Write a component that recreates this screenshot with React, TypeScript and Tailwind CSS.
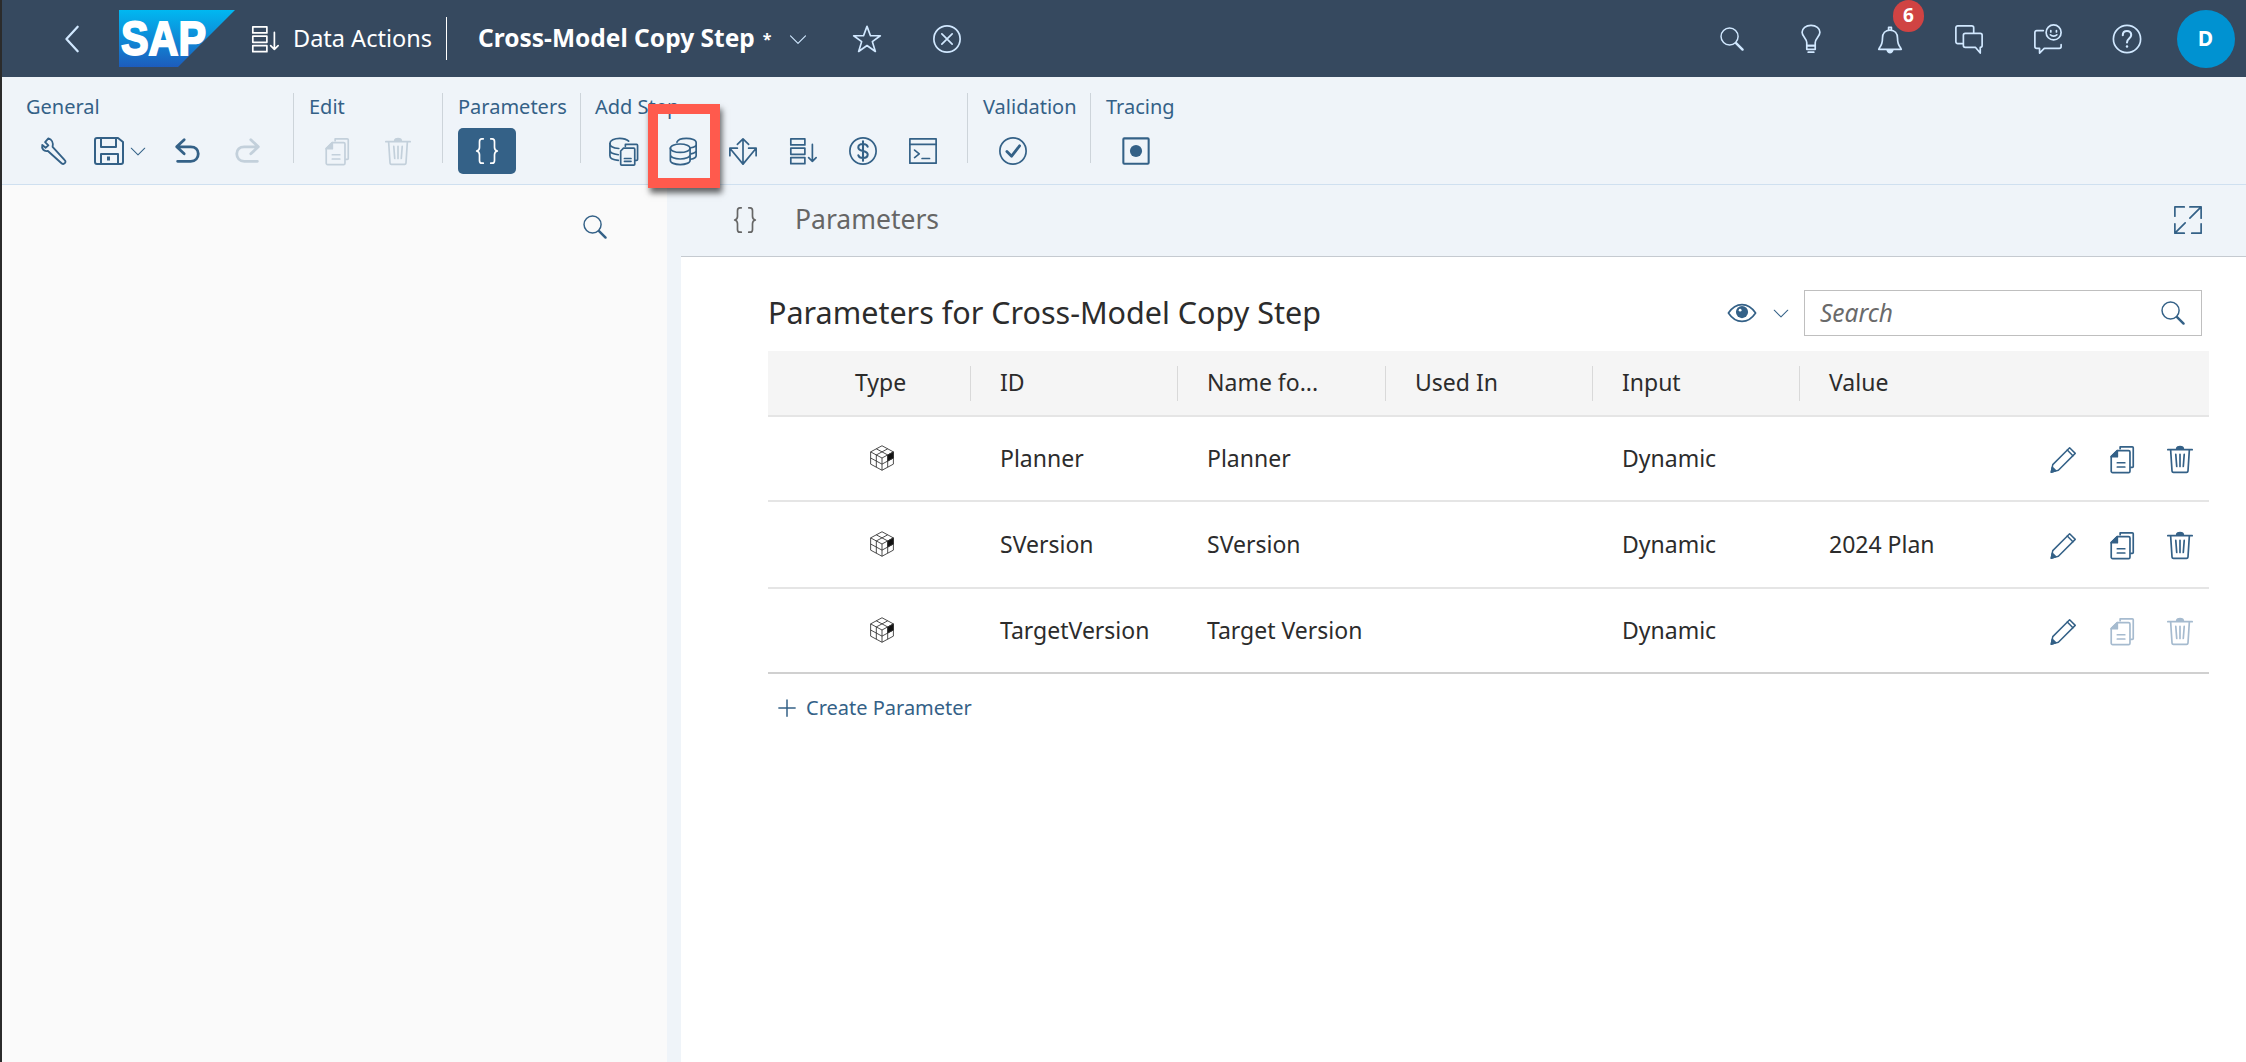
import React from "react";

type IconProps = { className?: string; children?: React.ReactNode };

function Icon({ className = "w-[30px] h-[30px]", children }: IconProps) {
  return (
    <svg viewBox="0 0 32 32" fill="none" stroke="currentColor" strokeWidth="1.8" strokeLinecap="round" strokeLinejoin="round" className={className} aria-hidden="true">
      {children}
    </svg>
  );
}

const WrenchIcon = () => (
  <Icon>
    <path strokeWidth="2" d="M10 2.500L6.500 6.500l3.500 3.500-3 2.500-3.500-3C2.500 13.500 5 17 9.500 16l14.500 13c1.200 1 2.500 1 3.500 0s1-2.300-.1-3.300L14.500 11.500C15.500 7 13.500 3.500 10 2.500z" />
  </Icon>
);
const SaveIcon = () => (
  <Icon className="w-[32px] h-[32px]">
    <path strokeWidth="2" d="M4 3h21l5 4v20a2 2 0 0 1-2 2H4a2 2 0 0 1-2-2V5a2 2 0 0 1 2-2z" />
    <path strokeWidth="2" d="M8 3v9h15V3M8 29V19h17v10" />
    <rect x="14" y="21.500" width="3" height="4" fill="currentColor" stroke="none" />
  </Icon>
);
const UndoIcon = () => (
  <Icon>
    <path strokeWidth="3" d="M13 4L5 11.500l8 7.500M6 11.500h14c5 0 8 3 8 7.500s-3 8-8 8H6" />
  </Icon>
);
const RedoIcon = () => (
  <Icon>
    <path strokeWidth="3" d="M19 4l8 7.500-8 7.500M26 11.500H12c-5 0-8 3-8 7.500s3 8 8 8h14" />
  </Icon>
);
const CopyIcon = () => (
  <Icon>
    <path d="M14 5V3h13a1 1 0 0 1 1 1v20a1 1 0 0 1-1 1h-1.500" />
    <path d="M11 7h12a1.500 1.500 0 0 1 1.500 1.500V29a1.500 1.500 0 0 1-1.500 1.500H6A1.500 1.500 0 0 1 4.500 29V13.500z" />
    <path d="M11 7v6.500H4.500z" fill="currentColor" />
    <path d="M11 20h8M11 24.500h8" />
  </Icon>
);
const TrashIcon = () => (
  <Icon>
    <path d="M3 6h26M6 6l1.500 23a1.500 1.500 0 0 0 1.500 1.300h14a1.500 1.500 0 0 0 1.500-1.300L26 6" />
    <path d="M12.500 5c0-3 7-3 7 0z" fill="currentColor" />
    <path d="M11.500 11l1 13M16 11v13M20.500 11l-1 13" />
  </Icon>
);
const BracesIcon = () => (
  <Icon>
    <path d="M12 3H10.500C8.500 3 8 4 8 6v6c0 2-1 3.500-3 4 2 .5 3 2 3 4v6c0 2 .5 3 2.500 3H12" />
    <path d="M20 3h1.500C23.500 3 24 4 24 6v6c0 2 1 3.500 3 4-2 .5-3 2-3 4v6c0 2-.5 3-2.500 3H20" />
  </Icon>
);
const DbCopyIcon = () => (
  <Icon className="w-[33px] h-[30px]">
    <path d="M1.500 8c0-3 4.500-5.500 10.500-5.500 4 0 7.500 1 9.500 3" />
    <path d="M1.500 8c0 3 4 5 9.500 5.300M1.500 8v13c0 2.500 3.500 4.500 9 5M1.500 15c0 2.500 3.500 4.500 9 5" />
    <path d="M18 11V9h12a1 1 0 0 1 1 1v15a1 1 0 0 1-1 1h-1" />
    <path d="M16 13h11a1 1 0 0 1 1 1v16a1 1 0 0 1-1 1H14a1 1 0 0 1-1-1V16z" />
    <path d="M17 24h7M17 27h7" />
  </Icon>
);
const DbStackIcon = () => (
  <Icon className="w-[33px] h-[30px]">
    <ellipse cx="12.500" cy="13" rx="10.500" ry="4.500" />
    <path d="M2 13v13c0 2.500 4.500 4.500 10.500 4.500S23 28.500 23 26V13M2 20c0 2.500 4.500 4.500 10.500 4.500S23 22.500 23 20" />
    <path d="M9 6.500C10 4 14 2.500 19 2.500c6 0 10.500 2 10.500 4.500v14c0 1.500-2 3-6 3.800M24 12.500c3-.5 5.500-2 5.500-3.500M24 19c3-.5 5.500-2 5.500-3.500" />
  </Icon>
);
const AllocateIcon = () => (
  <Icon>
    <path d="M16 3v27M10 9l6-6 6 6M16 30L2 13M16 30l14-17M2 13h8M2 13v8M30 13h-8M30 13v8" />
  </Icon>
);
const SortListIcon = () => (
  <Icon>
    <rect x="3" y="3" width="15" height="6.500" />
    <rect x="3" y="13" width="15" height="6.500" />
    <rect x="3" y="23" width="15" height="6.500" />
    <path d="M26 9v18M22 23l4 4 4-4" />
  </Icon>
);
const DollarIcon = () => (
  <Icon>
    <circle cx="16" cy="16" r="14" />
    <path strokeWidth="2.200" d="M21 11.500C20.500 9.500 18.500 8.500 16 8.500c-3 0-5 1.500-5 3.700 0 5 10 2.600 10 7.600 0 2.200-2 3.700-5 3.700-2.500 0-4.500-1-5-3M16 5.500v21" />
  </Icon>
);
const ConsoleIcon = () => (
  <Icon>
    <rect x="2" y="3" width="28" height="26" />
    <path d="M2 9h28M7 15l5 4-5 4M15 24h8" />
  </Icon>
);
const CheckCircleIcon = () => (
  <Icon>
    <circle cx="16" cy="16" r="14" />
    <path strokeWidth="3" d="M9.500 16.500l5 5 8.500-11" />
  </Icon>
);
const RecordIcon = () => (
  <Icon>
    <rect x="2.500" y="2.500" width="27" height="27" rx="1" strokeWidth="2.200" />
    <circle cx="16" cy="16" r="6.500" fill="currentColor" stroke="none" />
  </Icon>
);
const SearchIcon = ({ className }: IconProps) => (
  <Icon className={className}>
    <circle cx="13" cy="13" r="10.500" />
    <path strokeWidth="3" d="M21 21l8 8" />
  </Icon>
);
const ChevronDown = ({ className }: IconProps) => (
  <Icon className={className}>
    <path d="M4 11l12 12 12-12" />
  </Icon>
);
const StarIcon = () => (
  <Icon>
    <path d="M16 2.500l3.700 10h10.500l-8.500 6.300 3.200 10.500L16 23l-8.900 6.300 3.200-10.500-8.500-6.300h10.500z" />
  </Icon>
);
const CloseCircleIcon = () => (
  <Icon>
    <circle cx="16" cy="16" r="14" />
    <path d="M10.500 10.500l11 11M21.500 10.500l-11 11" />
  </Icon>
);
const BulbIcon = () => (
  <Icon>
    <path d="M11.500 23v-3c0-2-1-3.500-2.500-5.500-1.500-2-2.500-3.500-2.500-5.700C6.500 4.500 10.500 1.500 16 1.500s9.500 3 9.500 7.300c0 2.200-1 3.700-2.500 5.700-1.500 2-2.500 3.500-2.500 5.500v3z" />
    <path d="M11.500 23h9v4h-9zM13 30h6" />
  </Icon>
);
const BellIcon = () => (
  <Icon>
    <path d="M5 25c2.500-3 3-5.500 3-10 0-5 3-8.500 8-8.500s8 3.500 8 8.500c0 4.500.5 7 3 10l1 2H4z" />
    <path d="M14.500 6.500V3.500h3v3" />
    <path d="M13 27.500c.5 2 1.500 3 3 3s2.500-1 3-3z" fill="currentColor" />
  </Icon>
);
const ChatsIcon = () => (
  <Icon>
    <path d="M9 21H4a2 2 0 0 1-2-2V4a2 2 0 0 1 2-2h15a2 2 0 0 1 2 2v5" />
    <path d="M12 10h16a2 2 0 0 1 2 2v11a2 2 0 0 1-2 2v6l-5-6H12a2 2 0 0 1-2-2V12a2 2 0 0 1 2-2z" />
  </Icon>
);
const FeedbackIcon = () => (
  <Icon>
    <circle cx="22" cy="9" r="8" />
    <path d="M19 7v1.500M25 7v1.500M18.500 11.500c1.800 2 5.200 2 7 0" />
    <path d="M11 7H4a2 2 0 0 0-2 2v15a2 2 0 0 0 2 2h3v5l5-5h16a2 2 0 0 0 2-2v-2" />
  </Icon>
);
const HelpIcon = () => (
  <Icon>
    <circle cx="16" cy="16" r="14.500" />
    <path strokeWidth="2.200" d="M11.500 12c0-3 2-4.500 4.500-4.500s4.500 1.700 4.500 4.200c0 3.800-4.500 3.800-4.500 8" />
    <circle cx="16" cy="24" r="1.300" fill="currentColor" stroke="none" />
  </Icon>
);
const ExpandIcon = () => (
  <Icon>
    <path d="M18 2h12v12M30 2L18 14M2 20v10h10M2 30l11-11M2 12V2h10M20 30h10V20" />
  </Icon>
);
const EyeIcon = () => (
  <Icon>
    <path d="M1.500 16C5.500 10 10 7 16 7s10.500 3 14.500 9c-4 6-8.500 9-14.500 9S5.500 22 1.500 16z" />
    <circle cx="16" cy="15" r="6.500" fill="currentColor" stroke="none" />
    <circle cx="14" cy="13" r="1.500" fill="#fff" stroke="none" />
  </Icon>
);
const PencilIcon = () => (
  <Icon>
    <path strokeWidth="1.600" d="M22 4l6 6L10 28l-7.500 2 1.500-8z" />
    <path strokeWidth="1.600" d="M19.500 6.500l6 6" />
    <path d="M3.500 25l3.500 3.500-4.500 1.500z" fill="currentColor" />
  </Icon>
);
const PlusIcon = () => (
  <Icon className="w-[20px] h-[20px]">
    <path strokeWidth="2.400" d="M16 3v26M3 16h26" />
  </Icon>
);
const CubeIcon = () => (
  <svg viewBox="0 0 32 32" fill="none" stroke="#333" strokeWidth="1" strokeLinejoin="round" className="w-[28px] h-[28px]" aria-hidden="true">
    <path d="M16 2l13 7v14l-13 7-13-7V9z" />
    <path d="M3 9l13 7 13-7M16 16v14" />
    <path d="M9.500 5.500l13 7M22.500 5.500l-13 7M9.500 12.500v14M22.500 12.500v14M3 16l13 7 13-7" />
    <path d="M22.500 12.500L29 9v7l-6.500 3.500z" fill="#111" />
  </svg>
);
const SapLogo = () => (
  <svg viewBox="0 0 116 57" className="w-[116px] h-[57px]" aria-label="SAP">
    <defs>
      <linearGradient id="sap" x1="0" y1="0" x2="0" y2="1">
        <stop offset="0" stopColor="#00b8f1" />
        <stop offset="1" stopColor="#1d5cbc" />
      </linearGradient>
    </defs>
    <path d="M0 0h116L59 57H0z" fill="url(#sap)" />
    <text x="2" y="45" fontFamily="Liberation Sans, sans-serif" fontWeight="700" fontSize="48" textLength="85" lengthAdjust="spacingAndGlyphs" fill="#fff" stroke="#fff" strokeWidth="2">
      SAP
    </text>
  </svg>
);

function Tool({ w, dim, children }: { w: string; dim?: boolean; children: React.ReactNode }) {
  return <div className={`${w} ${dim ? "text-[#c3d0db]" : "text-[#346187]"} flex items-center justify-center`}>{children}</div>;
}

function Group({ label, className, children }: { label: string; className: string; children: React.ReactNode }) {
  return (
    <div className={`${className} relative flex flex-col shrink-0 pt-[8px]`}>
      <div className="h-[44px] text-[20px] leading-[44px] text-[#346187]">{label}</div>
      <div className="flex h-[48px] items-center -mt-[2px]">{children}</div>
    </div>
  );
}

const Sep = () => <div className="w-px h-[70px] bg-[#cdd4da] mt-[16px] shrink-0" />;

const rows = [
  { id: "Planner", name: "Planner", value: "", dim: false },
  { id: "SVersion", name: "SVersion", value: "2024 Plan", dim: false },
  { id: "TargetVersion", name: "Target Version", value: "", dim: true },
];

const columns = ["ID", "Name fo...", "Used In", "Input", "Value"];
const gridCols = "grid grid-cols-[202px_207px_208px_207px_207px_207px_1fr]";

export default function App() {
  return (
    <div className="relative h-[1062px] w-[2246px] overflow-hidden border-l-2 border-[#2b2b2b] bg-white font-['Noto_Sans',sans-serif] text-[#2c2c2c] flex flex-col">
      {/* Shell bar */}
      <header className="h-[77px] shrink-0 bg-[#36495f] text-white flex items-center">
        <div className="w-[117px] pl-[56px] text-[#d1e8ff] shrink-0">
          <Icon className="w-[30px] h-[30px]">
            <path strokeWidth="2.400" d="M21 3L9 16l12 13" />
          </Icon>
        </div>
        <SapLogo />
        <div className="ml-[15px] text-white">
          <SortListIcon />
        </div>
        <span className="ml-[13px] text-[23.500px] whitespace-nowrap">Data Actions</span>
        <div className="ml-[14px] w-px h-[43px] bg-white" />
        <span className="ml-[31px] text-[24.500px] font-bold whitespace-nowrap">Cross-Model Copy Step</span>
        <span className="ml-[8px] text-[16px] font-bold">*</span>
        <div className="ml-[17px] text-[#d1e8ff]">
          <ChevronDown className="w-[20px] h-[20px]" />
        </div>
        <div className="ml-[44px] text-[#d1e8ff]">
          <StarIcon />
        </div>
        <div className="ml-[50px] text-[#d1e8ff]">
          <CloseCircleIcon />
        </div>
        <div className="ml-auto flex items-center text-[#d1e8ff] pr-[1px]">
          <div className="w-[79px] flex justify-center"><SearchIcon className="w-[26px] h-[26px]" /></div>
          <div className="w-[79px] flex justify-center"><BulbIcon /></div>
          <div className="w-[79px] flex justify-center relative">
            <BellIcon />
            <span className="absolute left-[43px] -top-[24px] w-[31px] h-[32px] rounded-full bg-[#d04343] text-white text-[19px] font-bold flex items-center justify-center">6</span>
          </div>
          <div className="w-[79px] flex justify-center"><ChatsIcon /></div>
          <div className="w-[79px] flex justify-center"><FeedbackIcon /></div>
          <div className="w-[79px] flex justify-center"><HelpIcon /></div>
          <div className="w-[79px] flex justify-center">
            <div className="w-[58px] h-[58px] rounded-full bg-[#0092d1] text-white text-[21px] font-bold flex items-center justify-center">D</div>
          </div>
        </div>
      </header>

      {/* Toolbar */}
      <div className="h-[108px] shrink-0 bg-[#eff4f9] border-b border-[#cfe0f0] flex pl-[24px]">
        <Group label="General" className="w-[267px]">
          <Tool w="w-[56px]"><WrenchIcon /></Tool>
          <Tool w="w-[76px] gap-[4px]">
            <SaveIcon />
            <ChevronDown className="w-[18px] h-[18px]" />
          </Tool>
          <Tool w="w-[58px]"><UndoIcon /></Tool>
          <Tool w="w-[64px]" dim><RedoIcon /></Tool>
        </Group>
        <Sep />
        <Group label="Edit" className="w-[148px] pl-[15px]">
          <Tool w="w-[55px]" dim><CopyIcon /></Tool>
          <Tool w="w-[68px]" dim><TrashIcon /></Tool>
        </Group>
        <Sep />
        <Group label="Parameters" className="w-[137px] pl-[15px]">
          <div className="w-[58px] h-[46px] rounded-[5px] bg-[#346187] text-white flex items-center justify-center">
            <BracesIcon />
          </div>
        </Group>
        <Sep />
        <Group label="Add Step" className="w-[386px] pl-[14px]">
          <Tool w="w-[60px] -ml-[2px]"><DbCopyIcon /></Tool>
          <Tool w="w-[60px]"><DbStackIcon /></Tool>
          <Tool w="w-[60px]"><AllocateIcon /></Tool>
          <Tool w="w-[60px]"><SortListIcon /></Tool>
          <Tool w="w-[60px]"><DollarIcon /></Tool>
          <Tool w="w-[60px]"><ConsoleIcon /></Tool>
        </Group>
        <Sep />
        <Group label="Validation" className="w-[122px] pl-[15px]">
          <Tool w="w-[60px]"><CheckCircleIcon /></Tool>
        </Group>
        <Sep />
        <Group label="Tracing" className="w-[120px] pl-[15px]">
          <Tool w="w-[60px]"><RecordIcon /></Tool>
        </Group>
      </div>

      {/* Body */}
      <div className="flex flex-1 min-h-0">
        <aside className="w-[665px] shrink-0 bg-[#fafafa] flex justify-end pr-[59px] pt-[29px]">
          <div className="text-[#346187]"><SearchIcon className="w-[26px] h-[26px]" /></div>
        </aside>
        <div className="flex-1 flex flex-col bg-[#eff4f9] min-w-0">
          <div className="h-[71px] shrink-0 flex items-center pb-[2px]">
            <div className="ml-[63px] text-[#666]"><BracesIcon /></div>
            <span className="ml-[35px] text-[26.500px] text-[#666]">Parameters</span>
            <div className="ml-auto mr-[43px] text-[#346187]"><ExpandIcon /></div>
          </div>
          <main className="ml-[14px] flex-1 bg-white border-t border-[#c5cad0] pl-[87px] pr-[37px]">
            <div className="h-[94px] flex items-center pt-[18px]">
              <h1 className="text-[30.500px] font-normal text-[#2c2c2c]">Parameters for Cross-Model Copy Step</h1>
              <div className="ml-auto flex items-center text-[#346187] mr-[7px]">
                <EyeIcon />
                <div className="ml-[15px] mr-[14px]"><ChevronDown className="w-[18px] h-[18px]" /></div>
                <div className="w-[398px] h-[46px] border border-[#bfbfbf] bg-white flex items-center pl-[15px] pr-[15px]">
                  <span className="italic text-[24.500px] text-[#6a6a6a]">Search</span>
                  <div className="ml-auto"><SearchIcon className="w-[26px] h-[26px]" /></div>
                </div>
              </div>
            </div>

            <div className={`${gridCols} h-[66px] bg-[#f5f5f5] border-b-2 border-[#e5e5e5] items-center text-[23px]`}>
              <div className="pl-[87px] -mt-[2px]">Type</div>
              {columns.map((c) => (
                <div key={c} className="h-[35px] border-l border-[#d9d9d9] pl-[29px] flex items-center pb-[2px]">{c}</div>
              ))}
            </div>

            {rows.map((r, i) => (
              <div key={r.id} className={`${gridCols} ${i === 1 ? "h-[87px]" : "h-[85px]"} ${i === 2 ? "border-b-2 border-[#d0d0d0]" : "border-b-2 border-[#e5e5e5]"} items-center text-[23px]`}>
                <div className="pl-[100px] -mt-[2px]"><CubeIcon /></div>
                <div className="pl-[30px]">{r.id}</div>
                <div className="pl-[30px]">{r.name}</div>
                <div />
                <div className="pl-[30px]">Dynamic</div>
                <div className="pl-[30px]">{r.value}</div>
                <div className="flex items-center justify-end pr-[14px] gap-[28px]">
                  <div className="text-[#346187]"><PencilIcon /></div>
                  <div className={r.dim ? "text-[#a6bbcf]" : "text-[#346187]"}><CopyIcon /></div>
                  <div className={r.dim ? "text-[#a6bbcf]" : "text-[#346187]"}><TrashIcon /></div>
                </div>
              </div>
            ))}

            <div className="flex items-center mt-[19px] pl-[9px] text-[#346187]">
              <PlusIcon />
              <span className="ml-[9px] text-[20px]">Create Parameter</span>
            </div>
          </main>
        </div>
      </div>

      {/* Red highlight drawn over the screenshot */}
      <div className="absolute left-[646px] top-[104px] w-[72px] h-[84px] border-[10px] border-[#ff5a4d] shadow-[2px_5px_6px_rgba(0,0,0,0.6)]" />
    </div>
  );
}
